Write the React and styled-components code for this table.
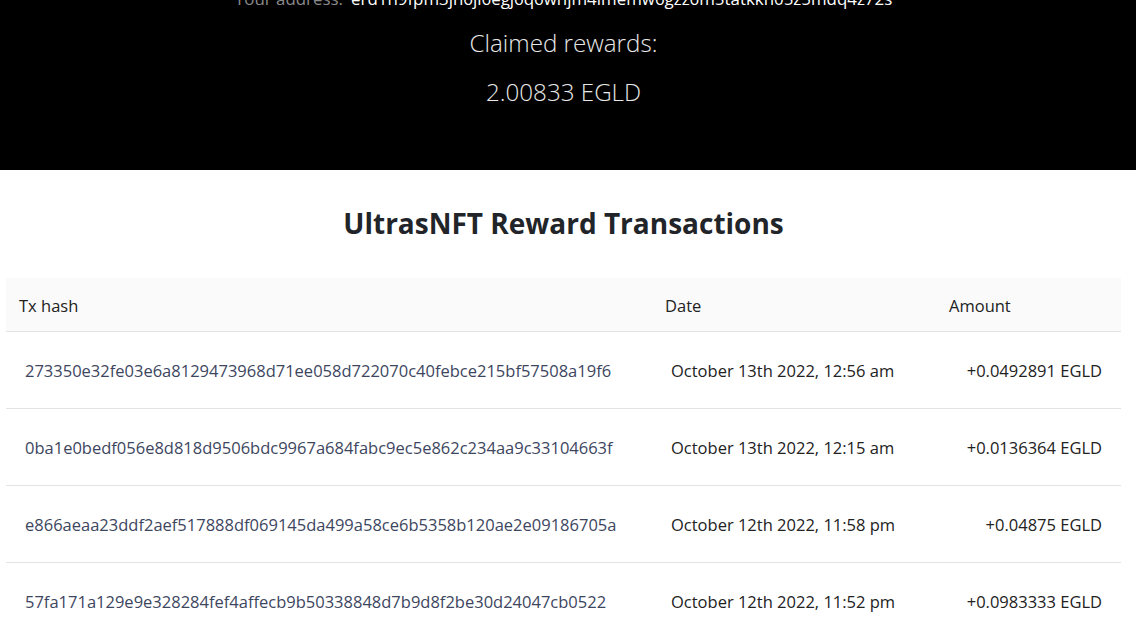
import React from "react";
import styled, { createGlobalStyle } from "styled-components";

const GlobalStyle = createGlobalStyle`
  body {
    margin: 0;
    background: #fff;
    font-family: "Open Sans", "Noto Sans", sans-serif;
    overflow: hidden;
  }
`;

const Page = styled.div`
  margin-top: -22px;
`;

const Hero = styled.header`
  background: #000;
  color: #e8e8e8;
  height: 192px;
  display: flex;
  flex-direction: column;
  align-items: center;
  padding: 10px 9px 0 0;
  box-sizing: border-box;
`;

const AddressLine = styled.div`
  font-size: 16.9px;
  line-height: 22px;
  display: flex;
  gap: 8px;
`;

const Label = styled.span`
  color: #8a8a8a;
`;

const Address = styled.span`
  color: #fff;
`;

const BigLine = styled.div`
  font-size: 24.2px;
  font-weight: 300;
  line-height: 32px;
  margin-top: ${(p) => p.$gap}px;
`;

const Main = styled.main`
  padding-right: 9px;
`;

const Title = styled.h2`
  margin: 35px 0 37px;
  text-align: center;
  font-size: 28px;
  font-weight: 700;
  color: #212529;
  line-height: 36px;
`;

const Table = styled.div`
  margin: 0 6px;
`;

const Row = styled.div`
  display: grid;
  grid-template-columns: 646px 284px 1fr;
  align-items: center;
  height: ${(p) => (p.$head ? 54 : 77)}px;
  padding-top: 1px;
  box-sizing: border-box;
  border-bottom: 1px solid #e3e3e6;
  background: ${(p) => (p.$head ? "#fafafa" : "transparent")};
`;

const HeadCell = styled.div`
  padding-left: 13px;
  font-size: 16.5px;
  color: #222;
`;

const Cell = styled.div`
  padding: 0 19px;
  font-size: 16.5px;
  color: ${(p) => (p.$hash ? "#3d4660" : "#222")};
  text-align: ${(p) => (p.$right ? "right" : "left")};
  white-space: nowrap;
`;

const txs = [
  {
    hash: "273350e32fe03e6a8129473968d71ee058d722070c40febce215bf57508a19f6",
    date: "October 13th 2022, 12:56 am",
    amount: "+0.0492891 EGLD",
  },
  {
    hash: "0ba1e0bedf056e8d818d9506bdc9967a684fabc9ec5e862c234aa9c33104663f",
    date: "October 13th 2022, 12:15 am",
    amount: "+0.0136364 EGLD",
  },
  {
    hash: "e866aeaa23ddf2aef517888df069145da499a58ce6b5358b120ae2e09186705a",
    date: "October 12th 2022, 11:58 pm",
    amount: "+0.04875 EGLD",
  },
  {
    hash: "57fa171a129e9e328284fef4affecb9b50338848d7b9d8f2be30d24047cb0522",
    date: "October 12th 2022, 11:52 pm",
    amount: "+0.0983333 EGLD",
  },
];

export default function App() {
  return (
    <Page>
      <GlobalStyle />
      <Hero>
        <AddressLine>
          <Label>Your address:</Label>
          <Address>erd1n9fpm3jh6jl6egj6q6wnjm4lmemw6gzz6m5tatkkn05z5mdq4z72s</Address>
        </AddressLine>
        <BigLine $gap={17}>Claimed rewards:</BigLine>
        <BigLine $gap={17}>2.00833 EGLD</BigLine>
      </Hero>
      <Main>
        <Title>UltrasNFT Reward Transactions</Title>
        <Table>
          <Row $head>
            <HeadCell>Tx hash</HeadCell>
            <HeadCell>Date</HeadCell>
            <HeadCell>Amount</HeadCell>
          </Row>
          {txs.map((tx) => (
            <Row key={tx.hash}>
              <Cell $hash>{tx.hash}</Cell>
              <Cell>{tx.date}</Cell>
              <Cell $right>{tx.amount}</Cell>
            </Row>
          ))}
        </Table>
      </Main>
    </Page>
  );
}
